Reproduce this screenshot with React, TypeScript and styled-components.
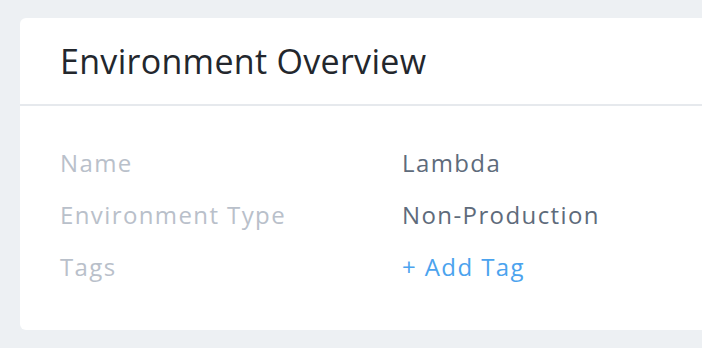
import React from 'react';
import styled, { createGlobalStyle } from 'styled-components';

const GlobalStyle = createGlobalStyle`
  html, body {
    margin: 0;
    padding: 0;
    background: #edf0f3;
    overflow: hidden;
  }
  body {
    font-family: "Open Sans", Lato, Arial, sans-serif;
  }
`;

const Page = styled.div`
  width: 702px;
  height: 348px;
  padding: 18px 0 0 20px;
  box-sizing: border-box;
  overflow: hidden;
`;

const Card = styled.section`
  width: 720px;
  height: 312px;
  background: #fff;
  border-radius: 6px;
  display: flex;
  flex-direction: column;
`;

const Header = styled.header`
  height: 86px;
  display: flex;
  align-items: center;
  padding: 0 40px;
  border-bottom: 2px solid #e6e9ed;
`;

const Title = styled.h2`
  margin: 0;
  font-size: 34px;
  font-weight: 400;
  letter-spacing: 0.3px;
  color: #23272d;
`;

const Body = styled.div`
  padding: 31px 40px 0;
  display: flex;
  flex-direction: column;
`;

const Row = styled.div`
  display: grid;
  grid-template-columns: 342px 1fr;
  height: 52px;
  line-height: 52px;
  font-size: 24px;
  letter-spacing: 1.4px;
`;

const Label = styled.span`
  color: #b9c0ca;
`;

const Value = styled.span<{ $link?: boolean }>`
  color: ${({ $link }) => ($link ? '#4ba3ee' : '#5e6b7b')};
  cursor: ${({ $link }) => ($link ? 'pointer' : 'default')};
`;

const rows = [
  { label: 'Name', value: 'Lambda' },
  { label: 'Environment Type', value: 'Non-Production' },
  { label: 'Tags', value: '+ Add Tag', link: true },
];

export default function App() {
  return (
    <Page>
      <GlobalStyle />
      <Card>
        <Header>
          <Title>Environment Overview</Title>
        </Header>
        <Body>
          {rows.map((r) => (
            <Row key={r.label}>
              <Label>{r.label}</Label>
              <Value $link={r.link}>{r.value}</Value>
            </Row>
          ))}
        </Body>
      </Card>
    </Page>
  );
}
